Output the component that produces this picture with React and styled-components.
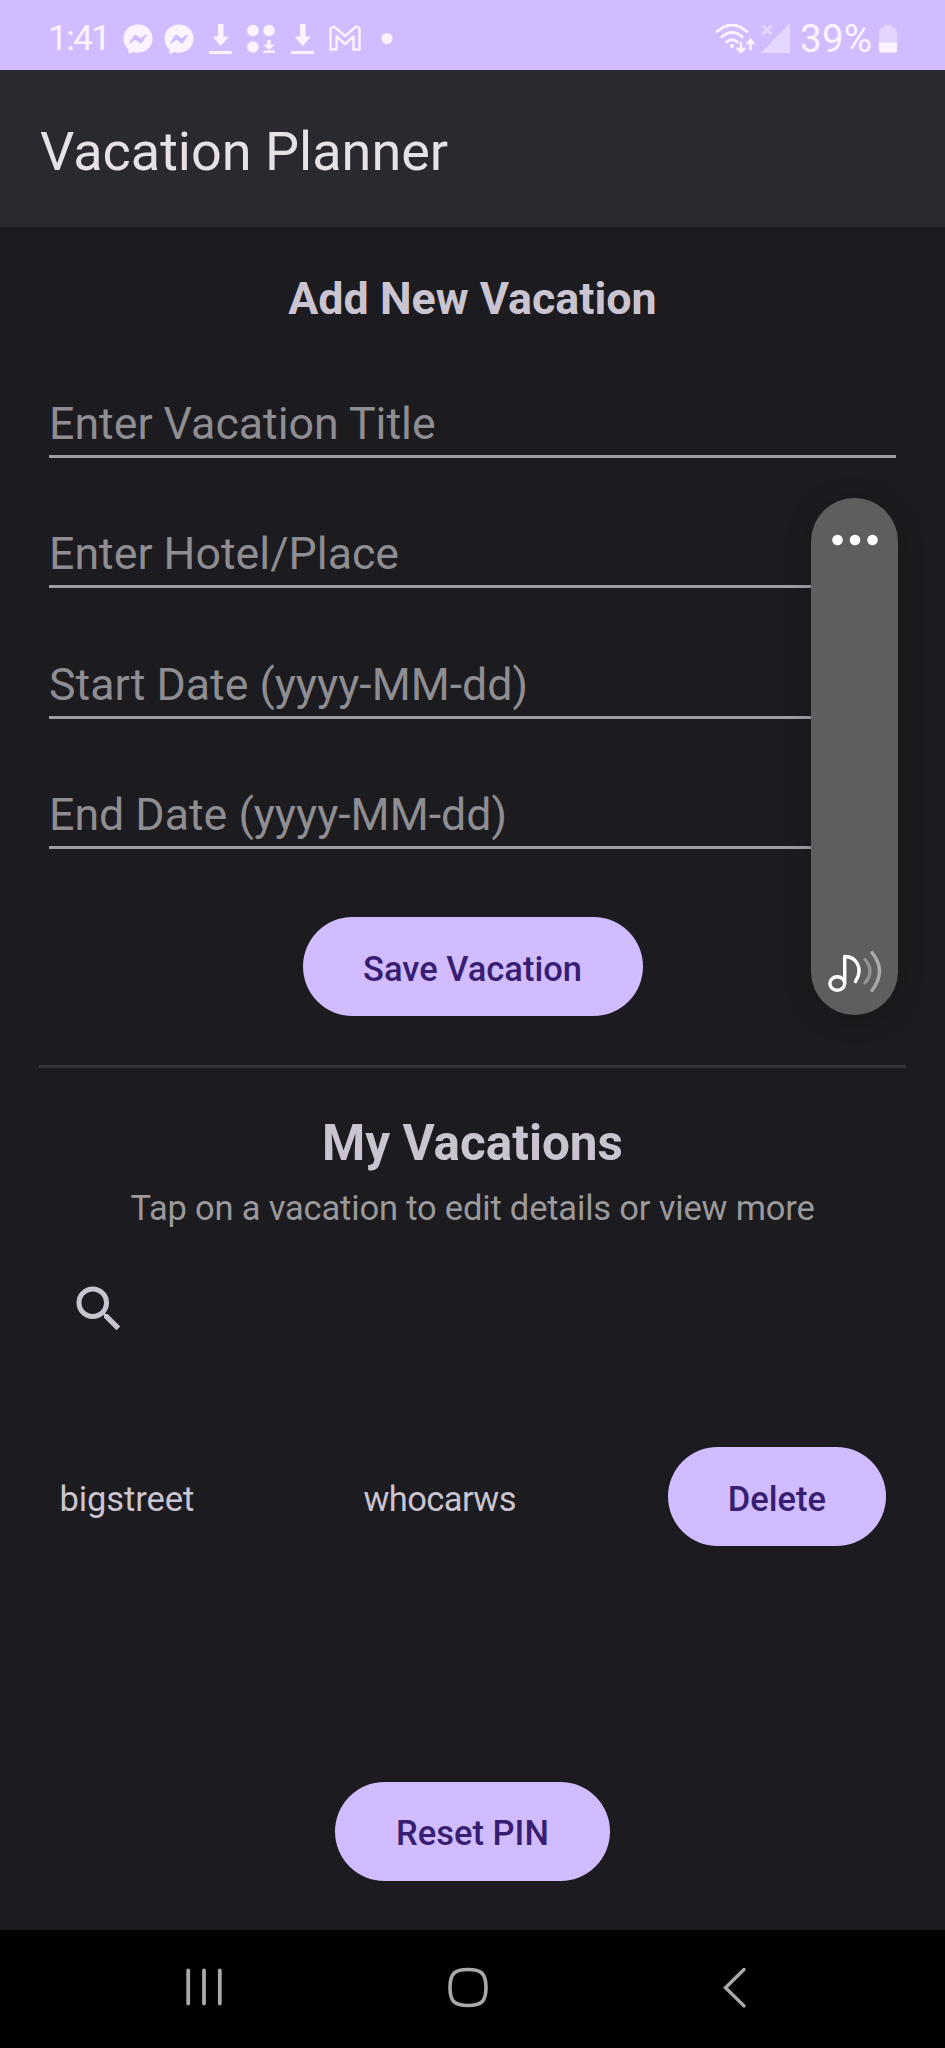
import React from "react";
import styled, { createGlobalStyle } from "styled-components";
import { FaFacebookMessenger } from "react-icons/fa";
import { MdSearch } from "react-icons/md";

const GlobalStyle = createGlobalStyle`
  * { box-sizing: border-box; }
  body { margin: 0; background: #1c1b1f; }
`;

const Screen = styled.div`
  position: relative;
  display: flex;
  flex-direction: column;
  width: 945px;
  height: 2048px;
  overflow: hidden;
  background: #1c1b1f;
  color: #cac4d0;
  font-family: Roboto, "Liberation Sans", sans-serif;
`;

const StatusBar = styled.header`
  display: flex;
  justify-content: space-between;
  flex: none;
  height: 70px;
  padding: 24px 47px 0 48px;
  background: #d0bcff;
  color: #fbf4ff;
`;

const StatusGroup = styled.div`
  display: flex;
  align-items: flex-start;
  height: 30px;

  svg { display: block; flex: none; }
`;

const StatusText = styled.span`
  width: ${(p) => p.$width}px;
  font-size: ${(p) => p.$size}px;
  line-height: 30px;
  letter-spacing: ${(p) => p.$tracking || 0}px;
  white-space: nowrap;
`;

const StatusIcons = styled.div`
  display: flex;
  gap: ${(p) => p.$gap}px;
  margin-left: ${(p) => p.$offset || 0}px;
`;

const AppBar = styled.div`
  display: flex;
  align-items: center;
  flex: none;
  height: 157px;
  padding: 6px 40px 0;
  background: #2b2930;
`;

const AppTitle = styled.h1`
  margin: 0;
  color: #e6e1e5;
  font-size: 54px;
  font-weight: 400;
  line-height: 64px;
`;

const FormSection = styled.form`
  display: flex;
  flex-direction: column;
  align-items: center;
  margin: 0 39px;
  padding: 45.5px 10px 48.5px;
  border-bottom: 3px solid #343338;
`;

const Heading = styled.h2`
  margin: 0;
  font-size: ${(p) => p.$size}px;
  font-weight: 700;
  line-height: ${(p) => p.$line}px;
`;

const Fields = styled.div`
  display: flex;
  flex-direction: column;
  gap: 70.3px;
  width: 847px;
  margin: 73.5px 0 68px;
`;

const Field = styled.input`
  display: block;
  width: 100%;
  height: 60px;
  padding: 0 0 5px;
  border: 0;
  border-bottom: 3px solid #a09da5;
  border-radius: 0;
  outline: 0;
  background: transparent;
  color: #cac4d0;
  font-family: inherit;
  font-size: 44.7px;
  line-height: 52px;

  &::placeholder { color: #8e8d92; opacity: 1; }
`;

const Button = styled.button`
  flex: none;
  width: ${(p) => p.$width}px;
  height: 99.5px;
  padding: 4px 0 0;
  border: 0;
  border-radius: 50px;
  background: #d0bcff;
  color: #381e72;
  font-family: inherit;
  font-size: 34.5px;
  font-weight: 500;
  line-height: 40px;
`;

const ListSection = styled.section`
  display: flex;
  flex-direction: column;
  align-items: center;
  padding-top: 46px;
`;

const Hint = styled.p`
  margin: 16px 0 0;
  color: #9a999b;
  font-size: 34.5px;
  line-height: 40px;
  letter-spacing: -0.18px;
`;

const SearchBar = styled.div`
  display: flex;
  align-self: stretch;
  margin-top: 51px;
  padding-left: 69px;
  color: #cac4d0;
`;

const VacationRow = styled.div`
  display: grid;
  grid-template-columns: 304px 304px auto;
  align-items: center;
  align-self: stretch;
  margin-top: 108px;
  padding-left: 59.5px;
`;

const Cell = styled.span`
  padding-top: 5px;
  font-size: 34.5px;
  line-height: 40px;
  letter-spacing: ${(p) => p.$tracking}px;
`;

const Footer = styled.div`
  display: flex;
  justify-content: center;
  margin-top: auto;
  padding-bottom: 49px;
`;

const NavBar = styled.nav`
  display: grid;
  grid-template-columns: 262px 275px auto;
  flex: none;
  height: 118px;
  padding: 37px 0 0 186px;
  background: #000;
`;

const VolumePanel = styled.aside`
  position: absolute;
  top: 498px;
  left: 811px;
  display: flex;
  flex-direction: column;
  justify-content: space-between;
  align-items: center;
  width: 87px;
  height: 516.5px;
  padding: 36px 0 18px;
  border-radius: 44px;
  background: #5e5e5e;
  box-shadow: 0 4px 28px rgba(0, 0, 0, 0.2);
`;

const DownloadIcon = () => (
  <svg width="23" height="30" viewBox="0 0 23 30" fill="currentColor">
    <path d="M9 0h5.500v12.500H20L11.700 22 3.500 12.500H9z" />
    <rect x="0" y="27" width="23" height="3" rx="1" />
  </svg>
);

const AppsIcon = () => (
  <svg width="29" height="30" viewBox="0 0 29 30" fill="currentColor">
    <circle cx="6" cy="6.500" r="5.800" />
    <circle cx="22" cy="6.500" r="5.800" />
    <circle cx="6" cy="23" r="5.800" />
    <path d="M20.300 16h3.400v4.500h4L22 26l-5.700-5.500h4z" />
    <rect x="16.500" y="26.500" width="11" height="2.500" />
  </svg>
);

const MailIcon = () => (
  <svg width="32" height="30" viewBox="0 0 32 30" fill="none" stroke="currentColor" strokeWidth="2.400" strokeLinejoin="round">
    <path d="M1.500 4.500Q3.500 1.500 6.500 3.800L16 12l9.500-8.200Q28.500 1.500 30.500 4.500V25.500H24.500V12.500L16 20 7.500 12.500V25.500H1.500z" />
  </svg>
);

const MoreDot = () => (
  <svg width="12" height="30" viewBox="0 0 12 30" fill="currentColor">
    <circle cx="6" cy="14.500" r="5.500" />
  </svg>
);

const WifiIcon = () => (
  <svg width="40" height="30" viewBox="0 0 40 30" fill="none" stroke="currentColor" strokeWidth="2.900" strokeLinecap="round">
    <path d="M2 7.500Q17-5.500 32 7.500M6.800 13Q17 4 27.200 13M11.500 18Q17 13.500 22.500 18" />
    <circle cx="17" cy="22" r="2" fill="currentColor" stroke="none" />
    <path d="M26 19v8M22.500 24.500L26 28l3.500-3.500M35.500 25v-8M32.500 19.500l3-3.500 3 3.500" strokeWidth="2.500" />
  </svg>
);

const SignalIcon = () => (
  <svg width="30" height="30" viewBox="0 0 30 30" opacity="0.5">
    <path d="M28 0h1v29H1v-1z" fill="currentColor" />
    <path d="M1.500 1.500l9 9M10.500 1.500l-9 9" stroke="currentColor" strokeWidth="2.800" />
  </svg>
);

const BatteryIcon = () => (
  <svg width="20" height="30" viewBox="0 0 20 30" fill="currentColor">
    <path d="M6 1h8v3h2q3 0 3 4v11H1V8q0-4 3-4h2z" opacity="0.45" />
    <path d="M1 18.500h18V26q0 2.500-2.500 2.500h-13Q1 28.500 1 26z" />
  </svg>
);

const DotsIcon = () => (
  <svg width="46" height="12" viewBox="0 0 46 12" fill="#fff">
    <ellipse cx="5.500" cy="6" rx="5.300" ry="5.200" />
    <ellipse cx="23" cy="6" rx="5.300" ry="5.200" />
    <ellipse cx="40.500" cy="6" rx="5.300" ry="5.200" />
  </svg>
);

const MediaVolumeIcon = () => (
  <svg width="54" height="46" viewBox="0 0 54 46" fill="none" stroke="#fff" strokeWidth="3.400" strokeLinecap="round">
    <ellipse cx="9.300" cy="32.500" rx="7.400" ry="6.700" />
    <path d="M16.700 32V5.500C28 5.500 36 17 27.500 30.500" strokeLinejoin="round" />
    <path d="M37 8.500Q47 20 37 32" stroke="#919191" />
    <path d="M44 1.700Q59 20 44 39.500" stroke="#aaa" />
  </svg>
);

const RecentsIcon = () => (
  <svg width="36" height="40" viewBox="0 0 36 40" stroke="#a9a9a9" strokeWidth="3.800" strokeLinecap="round">
    <path d="M2.200 3.500v33M18 3.500v33M33.800 3.500v33" />
  </svg>
);

const HomeIcon = () => (
  <svg width="40" height="42" viewBox="0 0 40 42" fill="none" stroke="#a9a9a9" strokeWidth="3.600">
    <path d="M20 2.500C33 2.500 38 6 38 20.500S33 38.500 20 38.500 2 35 2 20.500 7 2.500 20 2.500z" />
  </svg>
);

const BackIcon = () => (
  <svg width="24" height="42" viewBox="0 0 24 42" fill="none" stroke="#a9a9a9" strokeWidth="3.400" strokeLinecap="round" strokeLinejoin="miter">
    <path d="M21 2.500L2.500 20.700 21 38.900" />
  </svg>
);

const FIELDS = [
  "Enter Vacation Title",
  "Enter Hotel/Place",
  "Start Date (yyyy-MM-dd)",
  "End Date (yyyy-MM-dd)",
];

export default function App() {
  return (
    <>
      <GlobalStyle />
      <Screen>
        <StatusBar>
          <StatusGroup>
            <StatusText $width={75} $size={35} $tracking={-1.5}>1:41</StatusText>
            <StatusIcons $gap={11}>
              <FaFacebookMessenger size={30} />
              <FaFacebookMessenger size={30} />
            </StatusIcons>
            <StatusIcons $gap={15} $offset={15}>
              <DownloadIcon />
              <AppsIcon />
              <DownloadIcon />
              <MailIcon />
            </StatusIcons>
            <StatusIcons $offset={20}>
              <MoreDot />
            </StatusIcons>
          </StatusGroup>
          <StatusGroup>
            <StatusIcons $gap={6}>
              <WifiIcon />
              <SignalIcon />
            </StatusIcons>
            <StatusIcons $offset={9}>
              <StatusText $width={78} $size={38.5} $tracking={0.3}>39%</StatusText>
              <BatteryIcon />
            </StatusIcons>
          </StatusGroup>
        </StatusBar>

        <AppBar>
          <AppTitle>Vacation Planner</AppTitle>
        </AppBar>

        <FormSection>
          <Heading $size={44.8} $line={52}>Add New Vacation</Heading>
          <Fields>
            {FIELDS.map((label) => (
              <Field key={label} placeholder={label} />
            ))}
          </Fields>
          <Button type="button" $width={340}>Save Vacation</Button>
        </FormSection>

        <ListSection>
          <Heading $size={49.4} $line={58}>My Vacations</Heading>
          <Hint>Tap on a vacation to edit details or view more</Hint>
          <SearchBar>
            <MdSearch size={60} />
          </SearchBar>
          <VacationRow>
            <Cell $tracking={-0.1}>bigstreet</Cell>
            <Cell $tracking={-0.6}>whocarws</Cell>
            <Button type="button" $width={218.5}>Delete</Button>
          </VacationRow>
        </ListSection>

        <Footer>
          <Button type="button" $width={274.5}>Reset PIN</Button>
        </Footer>

        <NavBar>
          <RecentsIcon />
          <HomeIcon />
          <BackIcon />
        </NavBar>

        <VolumePanel>
          <DotsIcon />
          <MediaVolumeIcon />
        </VolumePanel>
      </Screen>
    </>
  );
}
